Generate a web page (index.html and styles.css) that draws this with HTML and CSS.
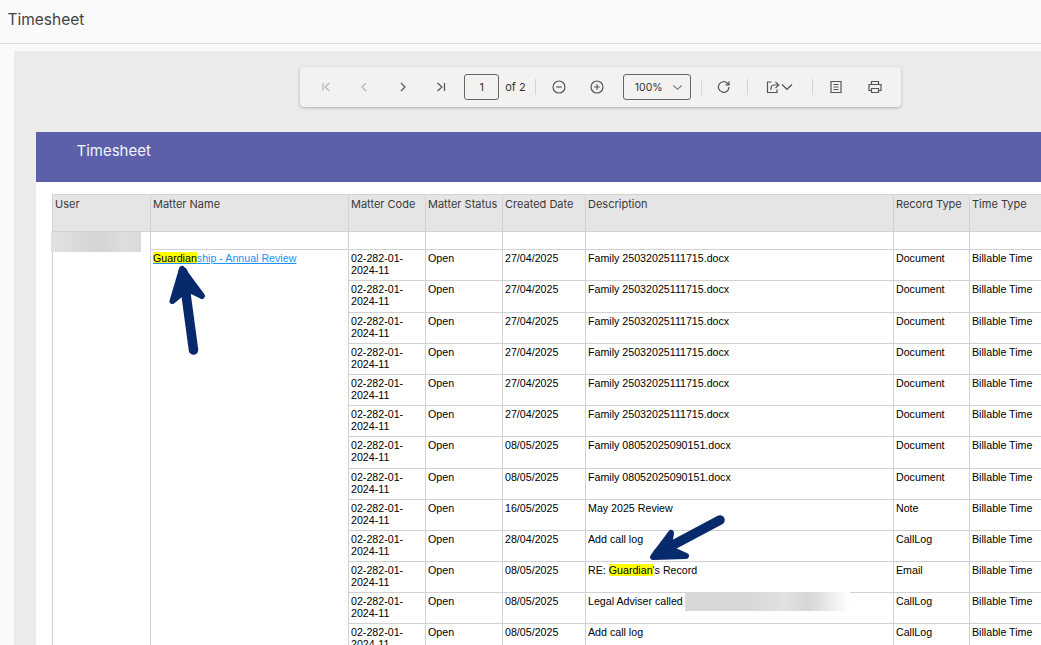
FILE: index.html
```html
<!DOCTYPE html>
<html lang="en">
<head>
<meta charset="utf-8">
<title>Timesheet</title>
<link rel="stylesheet" href="styles.css">
</head>
<body>
<header class="app-header">Timesheet</header>
<main class="viewer">
  <div class="toolbar">
    <button class="tool off"><svg viewBox="0 0 16 16"><path d="M5 4v8M11.500 4 7 8l4.500 4"/></svg></button>
    <button class="tool off"><svg viewBox="0 0 16 16"><path d="M10 4 6 8l4 4"/></svg></button>
    <button class="tool"><svg viewBox="0 0 16 16"><path d="M6 4l4 4-4 4"/></svg></button>
    <button class="tool"><svg viewBox="0 0 16 16"><path d="M4.500 4 9 8l-4.500 4M11.500 4v8"/></svg></button>
    <div class="page-input">1</div>
    <span class="page-of">of 2</span>
    <i class="sep sep-a"></i>
    <button class="tool"><svg viewBox="0 0 16 16"><circle cx="8" cy="8" r="6"/><path d="M5.200 8h5.600"/></svg></button>
    <button class="tool tool-plus"><svg viewBox="0 0 16 16"><circle cx="8" cy="8" r="6"/><path d="M5.200 8h5.600M8 5.200v5.600"/></svg></button>
    <div class="zoom-select"><span>100%</span><svg viewBox="0 0 12 12"><path d="M1.500 3.800 6 8l4.500-4.200"/></svg></div>
    <i class="sep sep-b"></i>
    <button class="tool tool-refresh"><svg viewBox="0 0 16 16"><path d="M13 8a5.300 5.300 0 1 1-1.600-3.800L13 5.800M13 2.300v3.500H9.500"/></svg></button>
    <i class="sep sep-c"></i>
    <button class="tool-export"><svg class="ex" viewBox="0 0 16 16"><path d="M6.500 3H2.500v10.500h9.500V10.500M6 11V9a3 3 0 0 1 3-3h4.500M10.500 2.800 13.700 6l-3.200 3.200"/></svg><svg class="ch" viewBox="0 0 12 12"><path d="M1 3.500 6 8.300l5-4.800"/></svg></button>
    <i class="sep sep-d"></i>
    <button class="tool tool-doc"><svg viewBox="0 0 16 16"><path d="M3 2.500h10v11H3zM5.500 5.500h5M5.500 8h5M5.500 10.500h5"/></svg></button>
    <button class="tool tool-print"><svg viewBox="0 0 16 16"><path d="M4.500 5.500v-3h7v3M4.500 11.500h-2.500v-6h12v6h-2.500M4.500 9.500h7v4h-7z"/></svg></button>
  </div>
  <section class="report">
    <div class="banner">Timesheet</div>
    <div class="table-wrap">
      <table class="sheet">
        <colgroup>
          <col class="c-user"><col class="c-name"><col class="c-code"><col class="c-status"><col class="c-date"><col class="c-desc"><col class="c-rec"><col class="c-time">
        </colgroup>
        <thead>
          <tr>
            <th>User</th><th>Matter Name</th><th>Matter Code</th><th>Matter Status</th><th>Created Date</th><th>Description</th><th>Record Type</th><th>Time Type</th>
          </tr>
        </thead>
        <tbody>
          <tr class="blank"><td rowspan="14"></td><td></td><td></td><td></td><td></td><td></td><td></td><td></td></tr>
          <tr><td rowspan="13"><a href="#"><mark>Guardian</mark>ship - Annual Review</a></td><td>02-282-01-2024-11</td><td>Open</td><td>27/04/2025</td><td>Family 25032025111715.docx</td><td>Document</td><td>Billable Time</td></tr>
          <tr><td>02-282-01-2024-11</td><td>Open</td><td>27/04/2025</td><td>Family 25032025111715.docx</td><td>Document</td><td>Billable Time</td></tr>
          <tr><td>02-282-01-2024-11</td><td>Open</td><td>27/04/2025</td><td>Family 25032025111715.docx</td><td>Document</td><td>Billable Time</td></tr>
          <tr><td>02-282-01-2024-11</td><td>Open</td><td>27/04/2025</td><td>Family 25032025111715.docx</td><td>Document</td><td>Billable Time</td></tr>
          <tr><td>02-282-01-2024-11</td><td>Open</td><td>27/04/2025</td><td>Family 25032025111715.docx</td><td>Document</td><td>Billable Time</td></tr>
          <tr><td>02-282-01-2024-11</td><td>Open</td><td>27/04/2025</td><td>Family 25032025111715.docx</td><td>Document</td><td>Billable Time</td></tr>
          <tr><td>02-282-01-2024-11</td><td>Open</td><td>08/05/2025</td><td>Family 08052025090151.docx</td><td>Document</td><td>Billable Time</td></tr>
          <tr><td>02-282-01-2024-11</td><td>Open</td><td>08/05/2025</td><td>Family 08052025090151.docx</td><td>Document</td><td>Billable Time</td></tr>
          <tr><td>02-282-01-2024-11</td><td>Open</td><td>16/05/2025</td><td>May 2025 Review</td><td>Note</td><td>Billable Time</td></tr>
          <tr><td>02-282-01-2024-11</td><td>Open</td><td>28/04/2025</td><td>Add call log</td><td>CallLog</td><td>Billable Time</td></tr>
          <tr><td>02-282-01-2024-11</td><td>Open</td><td>08/05/2025</td><td>RE: <mark>Guardian</mark>'s Record</td><td>Email</td><td>Billable Time</td></tr>
          <tr><td>02-282-01-2024-11</td><td>Open</td><td>08/05/2025</td><td>Legal Adviser called</td><td>CallLog</td><td>Billable Time</td></tr>
          <tr><td>02-282-01-2024-11</td><td>Open</td><td>08/05/2025</td><td>Add call log</td><td>CallLog</td><td>Billable Time</td></tr>
        </tbody>
      </table>
    </div>
  </section>
</main>
<div class="redact redact-user"></div>
<div class="redact redact-legal"></div>
<svg class="arrows" viewBox="0 0 1041 645">
  <path class="shaft" d="M193.500 350 183 272"/>
  <path class="head" d="M182 269 172.500 301 182 293 192 291 202 296z"/>
  <path class="shaft" d="M720 520 658 553"/>
  <path class="head" d="M653 557 671 533 669 545 675 551 686 556z"/>
</svg>
</body>
</html>
```
FILE: styles.css
```css
* { box-sizing: border-box; }
html, body { margin: 0; height: 645px; overflow: hidden; }
body {
  background: #fafafa;
  font-family: "Inter", "Liberation Sans", sans-serif;
  color: #333;
  position: relative;
}
.app-header {
  height: 44px;
  padding: 11px 7.500px 0;
  font-size: 15.500px;
  line-height: 18px;
  color: #444;
  border-bottom: 1px solid #dcdce4;
}
.viewer {
  margin: 7px 0 0 14px;
  height: 594px;
  background: #ecebe9;
  overflow: hidden;
  padding-top: 16px;
}
.toolbar {
  width: 601px;
  height: 40px;
  margin-left: 286px;
  padding-left: 7px;
  display: flex;
  align-items: center;
  background: #f3f2f1;
  border-radius: 4px;
  box-shadow: 0 1px 3px rgba(0, 0, 0, .25);
}
button { background: none; border: 0; padding: 0; margin: 0; }
.tool {
  width: 38.300px;
  height: 26px;
  display: flex;
  align-items: center;
  justify-content: center;
  flex: none;
}
svg { fill: none; stroke: #555; stroke-width: 1.200; }
.tool svg { width: 16px; height: 16px; }
.tool.off svg { stroke: #b5b5b5; }
.tool-plus { margin-left: -1px; }
.page-input {
  width: 35px;
  height: 26px;
  margin-left: 4px;
  border: 1px solid #666;
  border-radius: 3px;
  font-size: 11px;
  line-height: 24px;
  text-align: center;
  flex: none;
}
.page-of { margin-left: 6px; font-size: 11px; width: 20px; white-space: nowrap; flex: none; }
.sep { width: 1px; height: 16px; background: #d6d5d3; flex: none; }
.sep-a { margin-left: 10px; margin-right: 4px; }
.zoom-select {
  width: 68px;
  height: 26px;
  margin-left: 7px;
  padding: 0 7px 0 11px;
  border: 1px solid #666;
  border-radius: 3px;
  display: flex;
  align-items: center;
  justify-content: space-between;
  font-size: 10.500px;
  flex: none;
}
.zoom-select svg { width: 11px; height: 11px; stroke: #777; }
.sep-b { margin-left: 10px; margin-right: 3px; }
.sep-c { margin-left: 4px; }
.tool-export { display: flex; align-items: center; margin-left: 17px; width: 33px; flex: none; }
.tool-export .ex { width: 16px; height: 16px; flex: none; }
.tool-export .ch { width: 12px; height: 12px; flex: none; }
.sep-d { margin-left: 14px; margin-right: 4px; }
.report {
  margin: 25px 0 0 22px;
  background: #fff;
  height: 520px;
}
.banner {
  height: 50px;
  background: #5c5faa;
  color: #f4f4fb;
  padding: 9.500px 0 0 40.500px;
  font-size: 15px;
  font-weight: 400;
  line-height: 18px;
}
.table-wrap { padding: 12px 0 0 16px; }
.sheet {
  table-layout: fixed;
  width: 1010px;
  border-collapse: collapse;
}
.c-user { width: 98px; }
.c-name { width: 198px; }
.c-code { width: 77px; }
.c-status { width: 77px; }
.c-date { width: 83px; }
.c-desc { width: 308px; }
.c-rec { width: 76px; }
.c-time { width: 93px; }
th, td { border: 1px solid #d2d2d2; text-align: left; vertical-align: top; }
th {
  height: 37px;
  padding: 1px 2px;
  background: #e5e5e5;
  font-size: 11px;
  font-weight: 400;
  line-height: 16px;
  color: #3a3a3a;
  white-space: nowrap;
  overflow: hidden;
}
td {
  height: 31.200px;
  padding: 2px 2px 0;
  font-family: "Liberation Sans", Arial, sans-serif;
  font-size: 10.670px;
  line-height: 12px;
  color: #000;
}
.blank td { height: 18.200px; }
a { color: #1e90ff; }
mark { background: #ff0; color: #000; }
.redact { position: absolute; }
.redact-user {
  left: 51px; top: 232px; width: 90px; height: 20px;
  background: linear-gradient(90deg, #e2e2e2, #d4d4d4 55%, #dedede 80%, #d9d9d9);
}
.redact-legal {
  left: 685px; top: 592px; width: 165px; height: 19px;
  background: linear-gradient(90deg, #d8d8d8, #d8d8d8 40%, #e2e2e2 60%, #d6d6d6 75%, #fff);
}
.arrows { position: absolute; left: 0; top: 0; width: 1041px; height: 645px; pointer-events: none; }
.shaft { stroke: #062a6c; stroke-width: 9.500; stroke-linecap: round; }
.head { fill: #062a6c; stroke: #062a6c; stroke-width: 6; stroke-linejoin: round; }
```
